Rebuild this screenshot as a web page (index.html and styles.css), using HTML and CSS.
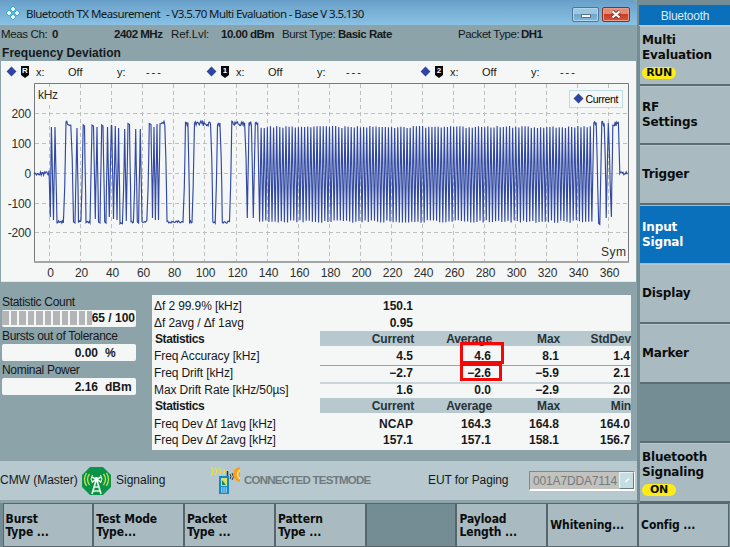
FILE: index.html
```html
<!DOCTYPE html>
<html lang="en">
<head>
<meta charset="utf-8">
<title>Bluetooth TX Measurement</title>
<link rel="stylesheet" href="styles.css">
</head>
<body>
<div class="screen">
  <main class="main">
    <header class="titlebar">
      <svg class="logo" width="14" height="14" viewBox="0 0 14 14"><path d="M7 0l3 3-3 3-3-3zM7 8l3 3-3 3-3-3zM3 4l3 3-3 3-3-3zM11 4l3 3-3 3-3-3z" fill="#e9f9ff" stroke="#20a8dc" stroke-width=".9"/></svg>
      <h1 class="title"><span class="t1">Bluetooth TX Measurement</span><span class="t2">- V3.5.70 Multi Evaluation - Base V 3.5.130</span></h1>
      <div class="winbtns"><span class="winbtn min"><i></i></span><span class="winbtn close"><svg width="12" height="9" viewBox="0 0 12 9"><path d="M2.5 1.5l7 6M9.5 1.5l-7 6" stroke="#6d3733" stroke-width="4"/><path d="M2.5 1.5l7 6M9.5 1.5l-7 6" stroke="#fff" stroke-width="2.2"/></svg></span></div>
    </header>
    <div class="info">
      <span>Meas Ch:</span><b>0</b><b>2402 MHz</b><span class="ref">Ref.Lvl:</span><b>10.00 dBm</b><span>Burst Type:</span><b>Basic Rate</b><span>Packet Type:</span><b>DH1</b>
    </div>
    <h2 class="heading">Frequency Deviation</h2>
    <section class="chart">
      <div class="markers">
        <div class="marker"><i class="diamond"></i><span class="tag">R</span><span>x:</span><span>Off</span><span>y:</span><span class="dash">---</span></div>
        <div class="marker"><i class="diamond"></i><span class="tag">1</span><span>x:</span><span>Off</span><span>y:</span><span class="dash">---</span></div>
        <div class="marker"><i class="diamond"></i><span class="tag">2</span><span>x:</span><span>Off</span><span>y:</span><span class="dash">---</span></div>
      </div>
      <svg id="plot" class="plot" width="634" height="199" viewBox="1 83 634 199">
        <g id="grid" class="grid"></g>
        <path d="M34.5 262V83.5H628.5V262" fill="none" stroke="#77797a"/>
        <path d="M34 262H629" stroke="#a3a5a5" stroke-width="2"/>
        <polyline id="trace" class="trace"/>
        <g id="labels" class="labels"></g>
        <rect x="36" y="87" width="24" height="15" fill="#f5f7f6"/>
        <text x="38" y="99" class="unit" textLength="20">kHz</text>
        <rect x="600" y="243" width="27" height="16" fill="#f5f7f6"/>
        <text x="601" y="256" class="unit" textLength="25">Sym</text>
        <rect x="569.5" y="90.5" width="53" height="17" fill="#f5f7f6" stroke="#bcdde3"/>
        <path d="M578.500 93.500l5 5-5 5-5-5z" fill="#3045a0"/>
        <text x="585.500" y="102.500" class="legend" textLength="33">Current</text>
      </svg>
    </section>
    <section class="lower">
      <div class="side">
        <label>Statistic Count</label>
        <div class="field count"><div class="blocks"><i></i><i></i><i></i><i></i><i></i><i></i><i></i><i></i><i></i><i></i><i></i></div><b>65 / 100</b></div>
        <label>Bursts out of Tolerance</label>
        <div class="field"><b class="num">0.00</b><b>%</b></div>
        <label>Nominal Power</label>
        <div class="field"><b class="num">2.16</b><b>dBm</b></div>
      </div>
      <div class="results">
        <div class="row"><span>Δf 2 99.9% [kHz]</span><div class="vals"><b>150.1</b></div></div>
        <div class="row"><span>Δf 2avg / Δf 1avg</span><div class="vals"><b>0.95</b></div></div>
        <div class="row head"><span>Statistics</span><div class="vals"><b>Current</b><b>Average</b><b>Max</b><b>StdDev</b></div></div>
        <div class="row line"><span>Freq Accuracy [kHz]</span><div class="vals"><b>4.5</b><b class="hl">4.6</b><b>8.1</b><b>1.4</b></div></div>
        <div class="row line soft"><span>Freq Drift [kHz]</span><div class="vals"><b>−2.7</b><b class="hl hl2">−2.6</b><b>−5.9</b><b>2.1</b></div></div>
        <div class="row"><span>Max Drift Rate [kHz/50µs]</span><div class="vals"><b>1.6</b><b>0.0</b><b>−2.9</b><b>2.0</b></div></div>
        <div class="row head"><span>Statistics</span><div class="vals"><b>Current</b><b>Average</b><b>Max</b><b>Min</b></div></div>
        <div class="row"><span>Freq Dev Δf 1avg [kHz]</span><div class="vals"><b>NCAP</b><b>164.3</b><b>164.8</b><b>164.0</b></div></div>
        <div class="row"><span>Freq Dev Δf 2avg [kHz]</span><div class="vals"><b>157.1</b><b>157.1</b><b>158.1</b><b>156.7</b></div></div>
      </div>
    </section>
    <section class="status">
      <span class="s1">CMW (Master)</span>
      <svg class="tower" width="29" height="28" viewBox="0 0 29 28"><path d="M8 0h13l8 8v12l-8 8H8l-8-8V8z" fill="#0b9447"/><path d="M14.500 12L10 27M14.500 12L19 27M12 20h5M11 24h7M10 10l9 5M19 10l-9 5" stroke="#e6f5e8" stroke-width="1.700" fill="none"/><circle cx="14.500" cy="12" r="2" fill="#fff"/><path d="M10.500 8q-3 4 0 8M18.500 8q3 4 0 8" stroke="#f2f8df" fill="none"/><path d="M7.500 7q-4 5 0 11M21.500 7q4 5 0 11M4.500 6q-4 6 0 13M24.500 6q4 6 0 13" stroke="#c7e04a" stroke-width="1.300" fill="none"/></svg>
      <span class="s2">Signaling</span>
      <svg class="phone" width="30" height="29" viewBox="0 0 30 29"><path d="M1 1q4 4 0 9M5 2q4 3 0 7M9 2q4 3 0 6M13 3q3 2 0 5" stroke="#ece431" stroke-width="1.200" fill="none"/><path d="M17.500 5v7" stroke="#334" stroke-width="1.500"/><path d="M9 10h10v18H9z" fill="#118acb"/><path d="M11 12h6v8h-6z" fill="#d6e06b"/><path d="M12 19v-5l4 5z" fill="#268653"/><path d="M11 22h6M11 24h6M11 26h6" stroke="#fff" stroke-dasharray="1.500 .75"/><path d="M20 8q2 3 0 5M22 7q3 4 0 7" stroke="#333" fill="none"/><path d="M30 1q-7 1-7 7 1 7 7 8z" fill="#f7a11d"/><path d="M30 4q-5 4 0 9" stroke="#fbe78c" stroke-width="1.500" fill="none"/></svg>
      <span class="s3">CONNECTED TESTMODE</span>
      <span class="s4">EUT for Paging</span>
      <div class="combo"><span>001A7DDA7114</span><i><svg width="12" height="12"><path d="M5.500 8l3.500-3.500" stroke="#fff" stroke-width="1.500"/></svg></i></div>
    </section>
  </main>
  <nav class="softkeys">
    <div class="caption"><span>Bluetooth</span></div>
    <div class="key state"><p>Multi<br>Evaluation</p><em>RUN</em></div>
    <div class="key">RF<br>Settings</div>
    <div class="key">Trigger</div>
    <div class="key active">Input<br>Signal</div>
    <div class="key">Display</div>
    <div class="key">Marker</div>
    <div class="key blank"></div>
    <div class="key state"><p>Bluetooth<br>Signaling</p><em>ON</em></div>
  </nav>
  <nav class="hotkeys">
    <div class="hot">Burst<br>Type ...</div><div class="hot">Test Mode<br>Type...</div><div class="hot">Packet<br>Type ...</div><div class="hot">Pattern<br>Type ...</div><div class="hot blank"></div><div class="hot">Payload<br>Length ...</div><div class="hot">Whitening...</div><div class="hot">Config ...</div>
  </nav>
</div>
<script src="plot.js"></script>
</body>
</html>
```
FILE: plot.js
```js
const NS = 'http://www.w3.org/2000/svg';
const grid = document.getElementById('grid');
const labels = document.getElementById('labels');
function add(parent, tag, attrs, text) {
  const node = document.createElementNS(NS, tag);
  for (const k in attrs) node.setAttribute(k, attrs[k]);
  if (text !== undefined) node.textContent = text;
  parent.appendChild(node);
}
for (let sym = 0; sym <= 360; sym += 20) {
  const x = Math.round(49.2 + sym * 1.5525) + 0.5;
  add(grid, 'line', { x1: x, x2: x, y1: 84, y2: 261 });
  add(labels, 'text', { x: x + 1, y: 277, 'text-anchor': 'middle' }, sym);
}
for (let f = -200; f <= 200; f += 100) {
  const y = Math.round(172.8 - f * 0.298) + 0.5;
  add(grid, 'line', { x1: 35, x2: 628, y1: y, y2: y });
  add(labels, 'text', { x: 31, y: y + 4.3, 'text-anchor': 'end' }, f);
}

// Deterministic ripple for the settled levels.
let seed = 7;
function ripple(size) {
  seed = (seed * 1103515245 + 12345) % 2147483648;
  return (seed / 2147483648 - 0.5) * size;
}
const HI = 123.5, LO = 222;
const points = [];
function to(x, y) { points.push(x.toFixed(2) + ',' + y.toFixed(2)); }
function level(x1, x2, y, size) { for (let x = x1; x <= x2; x += 0.8) to(x, y + ripple(size)); }

level(34, 48.5, 173.5, 3.2);
to(49, 170.5); to(49.3, 180);
// [from x, to x, state, level] of every run in the access code and header
const runs = [
  [50.3, 50.3, 'l', 217], [51.4, 51.4, 'h', 127], [53.5, 53.5, 'l', 220], [55, 55, 'h', 127],
  [57, 64, 'l'], [66, 71.5, 'h'], [73.5, 75, 'l'], [77, 77, 'h', 128], [78.5, 81.3, 'l'],
  [83.2, 84.5, 'h', 125], [86, 90, 'l'], [92, 93.5, 'h', 125], [95.3, 95.3, 'l', 219],
  [97, 97, 'h', 127], [98.5, 100, 'l'], [101.7, 103, 'h', 125], [104.7, 106, 'l'],
  [107.5, 107.5, 'h', 127], [109.3, 109.3, 'l', 217], [111.3, 111.8, 'h', 125],
  [113.5, 113.5, 'l', 219], [115.3, 115.3, 'h', 126], [117, 117, 'l', 220],
  [118.6, 118.6, 'h', 128], [120, 123, 'l', 223.5], [124.7, 124.7, 'h', 129],
  [126.3, 126.3, 'l', 221], [128, 129.5, 'h'], [131, 134, 'l'], [135.7, 135.7, 'h', 129],
  [137.3, 138.6, 'l'], [140.3, 140.3, 'h', 129], [142, 147.5, 'l'], [149.3, 151, 'h'],
  [152.5, 152.5, 'l', 218], [154, 154, 'h', 127], [155.4, 155.4, 'l', 220],
  [157, 157, 'h', 124], [158.5, 158.5, 'l', 220], [160, 165.3, 'h'], [167, 183.7, 'l'],
  [185.5, 188.3, 'h'], [189.6, 192.4, 'l'], [194.5, 211.3, 'h'], [212.8, 215.7, 'l'],
  [217.5, 220.7, 'h'], [222.3, 230, 'l'], [231.8, 245.3, 'h'], [247.3, 247.3, 'l', 218],
  [249, 251.5, 'h'], [253.3, 253.3, 'l', 218], [255.3, 257.8, 'h']
];
// Edges go vertical between two adjacent runs, with short settling slopes.
let last = null;
function drawRuns(list) {
  for (const [a, b, s, y] of list) {
    const v = y || (s === 'h' ? HI : LO);
    if (last && a - last.x > 1.2) {
      const mid = (a + last.x) / 2;
      to(mid - 0.3, last.y + (v - last.y) * 0.35);
      to(mid + 0.3, last.y + (v - last.y) * 0.65);
    }
    if (b - a < 2) { to(a, v); if (b > a) to(b, v + 1); } else level(a, b, v, s === 'h' ? 5 : 2.6);
    last = { x: b, y: v };
  }
}
drawRuns(runs);
// Alternating 1010 payload
let i = 0;
for (let x = 259.6; x < 592; x += 1.5525, i++) {
  to(x, i % 2 ? 127 + ripple(2) : 221.5 + ripple(2.5));
}
last = null;
drawRuns([[593.8, 596.2, 'h'], [598.7, 599.8, 'l', 223.5], [601.8, 604.8, 'h'], [606.2, 606.2, 'l', 218],
  [608.3, 608.3, 'h', 123], [611.4, 611.4, 'l', 217], [612.8, 619, 'h']]);
level(619.8, 628, 173.3, 3);
document.getElementById('trace').setAttribute('points', points.join(' '));
```
FILE: styles.css
```css
*, *::after { box-sizing: border-box; }
body { margin: 0; background: #8ca3a9; color: #15191b; font: 12px/15px "Liberation Sans", Arial, sans-serif; overflow: hidden; }
h1, h2, p { margin: 0; font-size: inherit; font-weight: inherit; }
span, b { white-space: nowrap; }
.screen { width: 730px; height: 547px; display: grid; grid-template-columns: 639px 91px; grid-template-rows: 503px 44px; background: #748c94; }
.main { background: #8ca3a9; width: 637px; height: 503px; display: flex; flex-direction: column; }
.titlebar { height: 25px; flex: none; display: flex; align-items: center; background: linear-gradient(#679fc8, #8ac2e5); border-top-right-radius: 5px; padding: 3px 7px 0 6px; }
.logo { flex: none; margin-top: -2px; }
.title { flex: 1; margin-left: 6px; display: flex; font: 11.5px/16px "Noto Sans", sans-serif; color: #101820; }
.t1 { width: 140px; letter-spacing: -.58px; }
.t2 { letter-spacing: -.6px; }
.winbtns { display: flex; gap: 3px; margin-top: 1px; }
.winbtn { height: 15px; width: 27px; border: 1px solid #4b7898; border-radius: 2px; box-shadow: inset 0 0 0 1px #b1d6ec; background: linear-gradient(#9bc7e2 45%, #6fa6cb 50%, #86b9da); display: flex; align-items: center; justify-content: center; }
.close { width: 28px; border-color: #7e342d; box-shadow: inset 0 0 0 1px #e79d8e; background: linear-gradient(#e28c78 45%, #c83c24 50%, #d75940); }
.min i { width: 10px; height: 4px; border: 1px solid #577386; background: #fff; margin-top: 2px; }
.info { height: 18px; flex: none; display: grid; grid-template-columns: 51px 62px 57px 50px 61px 56px 120px 63px 60px; padding: 2px 0 0 1px; font-size: 11.5px; letter-spacing: -.5px; }
.info span { letter-spacing: -.35px; }
.info span:nth-child(6), .info span:nth-child(8) { letter-spacing: -.42px; }
.info .ref { letter-spacing: -.1px; }
.heading { font: bold 12px/16px "Liberation Sans", Arial, sans-serif; height: 18px; flex: none; padding: 2px 0 0 2px; letter-spacing: .05px; }
.chart { width: 635px; height: 221px; flex: none; margin-left: 1px; background: #f5f7f6; border-bottom: 1px solid #dfe8e9; }
.markers { display: grid; grid-template-columns: 200px 214px 214px; height: 22px; padding: 4px 0 0 5px; font-size: 11px; }
.marker { display: grid; grid-template-columns: 15px 15px 32px 49px 29px 30px; }
.dash { letter-spacing: 1.9px; }
.diamond { width: 7px; height: 7px; background: #3045a0; transform: rotate(45deg); margin: 3px 0 0 2px; }
.tag { width: 8px; height: 12px; margin-top: 1px; background: #080808; clip-path: polygon(0 0, 100% 0, 100% 75%, 50% 100%, 0 75%); color: #fff; font: bold 8px/9px "Liberation Sans", sans-serif; text-align: center; }
.plot { display: block; }
.grid line { stroke: #bdbfbf; stroke-dasharray: 4 3; }
.trace { fill: none; stroke: #3149a3; stroke-width: 1.15; }
.labels, .unit { font: 12px "Liberation Sans", Arial, sans-serif; fill: #2c2f30; }
.labels { letter-spacing: -.2px; }
.legend { font: 10.5px "Liberation Sans", Arial, sans-serif; }
.lower { height: 179px; flex: none; display: grid; grid-template-columns: 152px 479px; padding-top: 12px; }
.side { margin-top: -1px; padding-left: 2px; display: flex; flex-direction: column; }
.side label { height: 17px; font-size: 12px; letter-spacing: -.3px; line-height: 18px; }
.field { width: 134px; height: 17px; background: #f5f7f6; border-radius: 2px; display: grid; grid-template-columns: 96px 36px; column-gap: 7px; line-height: 18px; }
.num { text-align: right; }
.count { display: flex; justify-content: flex-end; position: relative; padding-right: 1px; line-height: 16px; }
.blocks { position: absolute; left: 0; top: 1px; display: flex; gap: 2px; width: 90px; overflow: hidden; }
.blocks i { flex: none; width: 6.5px; height: 14px; background: #b3b5b6; }
.results { background: #f5f7f6; height: 155px; margin-top: 1px; padding-top: 2px; }
.row { height: 16.8px; display: grid; grid-template-columns: 168px 311px; line-height: 18px; }
.row > span { padding-left: 2px; letter-spacing: -.1px; }
.row.head > span { font-weight: bold; padding-left: 3px; letter-spacing: -.4px; line-height: 17px; }
.vals { display: grid; grid-template-columns: 93px 78px 68px 71px; text-align: right; letter-spacing: 0; }
.head .vals { background: #b7c9cf; height: 15px; line-height: 16px; padding-left: 1px; letter-spacing: -.15px; color: #26343a; }
.line .vals { border-bottom: 1px solid #8fa6ad; }
.soft .vals { border-bottom: 2px solid #c9d6d9; }
.hl { position: relative; }
.hl::after { content: ""; position: absolute; left: 47px; top: -5px; width: 44px; height: 22px; border: 3px solid #f30808; z-index: 2; }
.hl2::after { top: -1px; width: 42px; height: 18px; }
.status { height: 39px; width: 637px; background: #b7c9cf; display: grid; grid-template-columns: 82px 34px 94px 34px 184px 101px 106px; align-items: center; flex: none; }
.s1 { letter-spacing: -.03px; }
.s4 { letter-spacing: -.1px; }
.s3 { color: #707a7e; font-weight: bold; font-size: 11.5px; letter-spacing: -.75px; }
.phone { margin-top: -1px; }
.combo { height: 20px; width: 106px; border: 1px solid #748c94; border-right-color: #fff; border-bottom: 2px solid #fff; background: #c2c2bf; display: flex; justify-content: space-between; color: #767a7b; padding-left: 3px; line-height: 18px; }
.combo span { letter-spacing: -.15px; }
.combo i { background: #c5dee4; width: 15px; border: 1px solid #e8f4f5; border-right-color: #687b84; border-bottom-color: #687b84; }
.softkeys { display: flex; flex-direction: column; padding-top: 5px; font: bold 12px/15px "DejaVu Sans", Verdana, sans-serif; color: #0b0d0e; background: #748c94; }
.caption { height: 21px; flex: none; background: #0a70bb; color: #dcecf6; display: flex; align-items: center; justify-content: center; font: 12px/15px "Liberation Sans", Arial, sans-serif; letter-spacing: -.25px; padding: 3px 0 0 1px; border-bottom: 1px solid #b8cacf; }
.key { height: 59.6px; flex: none; margin-left: 1px; padding-left: 2px; border-bottom: 2px solid #5c6d73; background: #a9bbc1; display: flex; flex-direction: column; justify-content: center; align-items: flex-start; letter-spacing: -.15px; border-top: 1px solid #b8c7cc; }
.key.state { padding-top: 2px; }
.key.active { background: #0a70bb; color: #fff; border-color: #8fc4d4; border-bottom-width: 1px; }
.key.blank { background: #748c94; border-top-color: #748c94; }
.key em { font: bold 11px/12px "DejaVu Sans", Verdana, sans-serif; background: #fdec16; width: 34px; height: 12px; text-align: center; border-radius: 6px; margin-top: 4px; letter-spacing: -.4px; }
.hotkeys { grid-column: 1 / -1; display: grid; grid-template-columns: repeat(8, 90.8px); padding-left: 2.5px; background: #748c94; font: bold 12px/13px "DejaVu Sans Condensed", "DejaVu Sans", Tahoma, sans-serif; font-stretch: condensed; color: #0b0d0e; }
.hot { background: #a9bbc1; border: 1px solid #56666c; padding: 1px 0 0 2px; display: flex; align-items: center; letter-spacing: -.1px; }
.hot.blank { background: #748c94; }
```
